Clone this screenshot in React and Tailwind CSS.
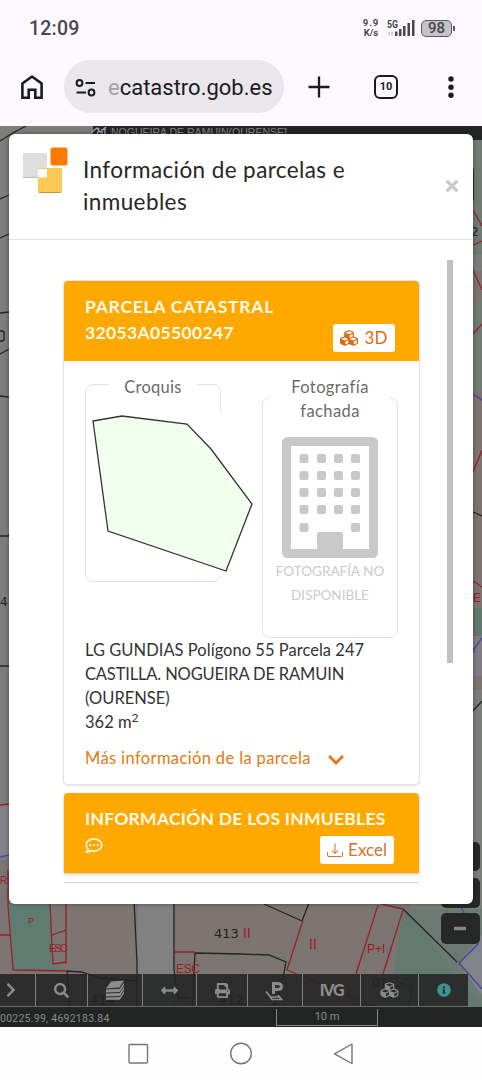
import { FaChevronRight, FaChevronDown, FaSearch, FaArrowsAltH, FaPrint, FaCubes, FaInfoCircle, FaRegCommentDots, FaTimes } from 'react-icons/fa';
import { BsDownload } from 'react-icons/bs';

function StatusBar() {
  return (
    <div className="h-[56px] flex items-center pl-[29px] pr-[27px] text-[#48464c]">
      <span className="mt-px text-[19.5px] font-medium tracking-[0.2px] font-['Roboto',sans-serif]">12:09</span>
      <div className="ml-auto flex items-center">
        <div className="font-['Roboto',sans-serif] text-[9.5px] leading-[10px] font-bold text-center w-[18px]">
          <div className="tracking-[0.9px]">9.9</div>
          <div>K/s</div>
        </div>
        <svg width="29" height="20" viewBox="386 18 29 20" className="ml-[6px]" fill="#48464c">
          <text x="387" y="27.5" fontSize="10" fontWeight="700" fontFamily="Roboto, sans-serif" textLength="11" lengthAdjust="spacingAndGlyphs">5G</text>
          <path d="M388 32h2v3h-2zM391 32h2v3h-2z" opacity=".25" />
          <path d="M395 31.500h2.500v4.500H395zM399 29h2.500v7H399zM403 26h2.500v10H403zM407.500 23H410v13h-2.500zM412 20h2.500v16H412z" />
        </svg>
        <div className="ml-[6px] w-[31px] h-[17px] rounded-[5px] border-[1.5px] border-[#5c5a60] bg-[#c5c2c9] flex items-center justify-center text-[15px] font-medium leading-none font-['Roboto',sans-serif]">98</div>
        <div className="ml-px w-[2px] h-[5px] bg-[#5c5a60]" />
      </div>
    </div>
  );
}

function BrowserBar() {
  return (
    <div className="h-[70px] flex items-start pt-[4px] text-[#1b1b1f]">
      <svg width="24" height="26" viewBox="0 0 24 26" className="ml-[20px] mt-[14px]" fill="none" stroke="currentColor" strokeWidth="2.600">
        <path d="M2.400 9.500 12 2.500l9.600 7v14.200h-6.300v-8H8.700v8H2.400z" />
      </svg>
      <div className="ml-[20px] w-[220px] h-[53px] rounded-full bg-[#e9e6ec] flex items-center">
        <svg width="22" height="18" viewBox="0 0 22 18" className="ml-[11px] mt-[2px]" fill="none" stroke="currentColor" strokeWidth="2">
          <circle cx="4.500" cy="4" r="2.900" />
          <path d="M10.500 4H20M1.500 13.500H11" />
          <circle cx="16.500" cy="13.500" r="2.900" />
        </svg>
        <span className="ml-[11px] mt-px text-[22px] font-['Roboto',sans-serif] whitespace-nowrap">
          <span className="text-[#a3a1a7]">e</span>catastro.gob.es
        </span>
      </div>
      <svg width="22" height="22" viewBox="0 0 22 22" className="ml-[24px] mt-[16px]" stroke="currentColor" strokeWidth="2.300">
        <path d="M11 .5v21M.5 11h21" />
      </svg>
      <div className="ml-[44px] mt-[15px] w-[24px] h-[24px] rounded-[6px] border-2 border-current flex items-center justify-center text-[11px] font-bold font-['Roboto',sans-serif]">10</div>
      <svg width="6" height="24" viewBox="0 0 6 24" className="ml-[50px] mt-[15px]" fill="currentColor">
        <circle cx="3" cy="4" r="2.700" />
        <circle cx="3" cy="12.200" r="2.700" />
        <circle cx="3" cy="20.300" r="2.700" />
      </svg>
    </div>
  );
}

// dimmed cadastral map behind the dialog
function MapCanvas() {
  return (
    <svg className="absolute inset-0" width="482" height="901" viewBox="0 126 482 901" fill="none" fontFamily="Liberation Sans, sans-serif">
      <rect y="126" width="482" height="901" fill="#7b7e7a" />
      <path d="M472 270h10v420h-10z" fill="#7d7471" />
      <path d="M472 140h10v115h-10zM472 300h10v90h-10z" fill="#6f7b73" />
      <path d="M472 608h10v28h-10z" fill="#62796e" />
      <path d="M472 636h10v40h-10z" fill="#807d85" />
      <path d="M0 805h9v52H0z" fill="#85818a" />
      <path d="M0 860h67v167H0zM67 900h71v127H67zM174 900h238l-20 127H174z" fill="#7d7571" />
      <path d="M138 900h36v127h-38z" fill="#818181" />
      <path d="M8 900h42l3 65 14 5H13z" fill="#607b70" />
      <path d="M403 909h79v118h-95z" fill="#637a70" />
      <path d="M403 909h79v97z" fill="#6b7a73" />
      <path d="M458 963l24-28v60z" fill="#82848c" />

      <path d="M93 126h389v14H93z" fill="#242525" />
      <text x="111" y="136" fontSize="10.500" fill="#858585" textLength="176" lengthAdjust="spacingAndGlyphs">NOGUEIRA DE RAMUIN(OURENSE]</text>
      <path d="M92 132l5-4 3 4 6-5M97 135l2-7m3 7v-6m3 5v-7" stroke="#a3a3a3" strokeWidth="1.300" />

      <g stroke="#242424" strokeWidth="1.300">
        <path d="M0 141q14-9 26-15M0 199l9-4M0 238l9-4M0 313l9-1M0 354l9-5M0 396l9 1M0 536h9v-2M0 666h9" />
        <path d="M473 512l9 4M473 711l9-10M134 900l3 63v64M174 900v70l4 28h12M195 953l-4 74M195 953l46 1 28 1 17 7-5 26-16 39M264 904l38 17 7-18M403 909l54 53M67 971l14 1 20 6 37 3M67 971l3 47 30 4 38 4" />
      </g>
      <g stroke="#96222b" strokeWidth="1.300">
        <path d="M8 870v35l5 65 54 1M0 935h11M50 904l3 60 14-2M66 904v26l-14 5M66 930v34M174 952h21M303 920l-16 50 100 42M378 905l-22 69M403 910l-20 64M381 904l22 5" />
        <path d="M473 210l9 16M473 245l9-4M473 270l9 20M473 334l9-10M473 472l9-22M473 581l9 6M0 805l9-1M408 992l5-5-9 33" />
      </g>
      <path d="M473 394l9 6M482 638l-8 11v4M0 857l9-2M460 904l18 40-19 19 23 26" stroke="#514a9c" strokeWidth="1.600" />

      <g fill="#9c1c29">
        <text x="28" y="924" fontSize="9">P</text>
        <text x="49" y="952" fontSize="11" textLength="19">ESC</text>
        <text x="176" y="973" fontSize="12" textLength="24">ESC</text>
        <text x="243" y="938" fontSize="14">II</text>
        <text x="309" y="949" fontSize="14">II</text>
        <text x="367" y="953" fontSize="12">P+I</text>
        <text x="473" y="602" fontSize="12">E</text>
        <text x="0" y="884" fontSize="10">R</text>
      </g>
      <g fill="#1f1f1f" fontFamily="DejaVu Sans, sans-serif">
        <text x="214" y="938" fontSize="13">413</text>
        <text x="90" y="1004" fontSize="13">414</text>
        <text x="219" y="1004" fontSize="13">412</text>
        <text x="372" y="987" fontSize="12">01<tspan fill="#6e1c24">ESC</tspan></text>
        <text x="0" y="606" fontSize="12">4</text>
        <text x="471" y="236" fontSize="12">2</text>
      </g>
      {/* parcel number running under the dialog edge */}
      <path d="M0 331h2q2 0 2 2v6q0 2-2 2H0" stroke="#1f1f1f" strokeWidth="1.300" />

      {/* zoom controls */}
      <rect x="462" y="168" width="12" height="34" rx="3" fill="#2b2c2c" />
      <rect x="441" y="842" width="39" height="29" rx="5" fill="#262727" />
      <rect x="441" y="878" width="39" height="30" rx="5" fill="#262727" />
      <rect x="441" y="913" width="39" height="31" rx="5" fill="#262727" />
      <path d="M454 928.500h12" stroke="#858585" strokeWidth="3.500" />
    </svg>
  );
}

function Header({ children, action, title }) {
  return (
    <div className="h-[80px] bg-[#ffa800] rounded-t-[4px] pl-[21px] pr-[24px] pt-[13px] text-[#fffbe8]">
      <div className="h-[25px] text-[17.5px] leading-[25px] font-bold whitespace-nowrap">{title}</div>
      <div className="flex items-start justify-between">
        <div className="pt-[2px] text-[17.5px] leading-[24px] font-bold">{children}</div>
        {action}
      </div>
    </div>
  );
}

function Building() {
  const rows = [455, 472, 489, 506, 524];
  const cols = [299.500, 317, 334, 351];
  return (
    <svg width="96" height="121" viewBox="282 437 96 121" fill="#c9c9c9">
      <rect x="286.500" y="441.500" width="87" height="112" rx="1" fill="none" stroke="#c9c9c9" strokeWidth="9" strokeLinejoin="round" />
      {rows.map((y, r) =>
        cols.map((x, c) => (r === 4 && (c === 1 || c === 2) ? null : <rect key={`${x}-${y}`} x={x} y={y - 1} width="9" height="9" rx="2" />))
      )}
      <path d="M317 534q0-2 2-2h22q2 0 2 2v22h-26z" />
    </svg>
  );
}

function ParcelCard() {
  return (
    <div className="h-[503px] rounded-[4px] shadow-[0_0_0_1px_#e4e4e4,0_1px_3px_#ccc]">
      <Header
        title={<span className="tracking-[0.75px]">PARCELA CATASTRAL</span>}
        action={
          <button className="mt-[5px] w-[62px] h-[28px] rounded-[3px] bg-white text-[#d96a10] flex items-center justify-center gap-[6px] text-[17px] pr-[2px]">
            <FaCubes className="w-[20px] h-[18px]" />
            3D
          </button>
        }
      >
        <span className="tracking-[0.35px]">32053A05500247</span>
      </Header>
      <div className="px-[21px] pt-[11px]">
        <div className="flex items-start h-[266px] gap-[41px] text-[16.5px] text-[#6b6b6b]">
          <fieldset className="min-w-0 w-[136px] h-[210px] border border-[#e2e2e2] rounded-[8px]">
            <legend className="mx-auto w-[88px] h-[24px] pt-[3px] leading-[24px] text-center tracking-[0.25px]">Croquis</legend>
            <svg width="165" height="164" viewBox="91 412 165 164" className="ml-[5px] mt-[16px] bg-white max-w-none">
              <path d="M93 421 122 416 187 424 211 449 252 504 226 571 108 531z" fill="#f0ffee" stroke="#333" strokeWidth="1.300" />
            </svg>
          </fieldset>
          <fieldset className="mt-px min-w-0 w-[136px] h-[265px] border border-[#e2e2e2] rounded-[8px]">
            <legend className="mx-auto w-[120px] h-[48px] pt-[2px] leading-[24px] text-center tracking-[0.4px]">Fotografía fachada</legend>
            <div className="flex flex-col items-center pt-[16px]">
              <Building />
              <div className="mt-px w-[112px] text-center text-[13.5px] leading-[24px] whitespace-nowrap text-[#cbcbcb]">FOTOGRAFÍA NO<br />DISPONIBLE</div>
            </div>
          </fieldset>
        </div>
        <div className="text-[16.5px] leading-[24px] text-[#333] whitespace-nowrap">
          <div className="tracking-[0.03px]">LG GUNDIAS Polígono 55 Parcela 247</div>
          <div className="tracking-[-0.16px]">CASTILLA. NOGUEIRA DE RAMUIN</div>
          <div>(OURENSE)</div>
          <div>362 m<sup className="text-[12px]">2</sup></div>
        </div>
        <a className="mt-[12px] flex items-center text-[16.5px] leading-[24px] text-[#e17a12]">
          <span className="tracking-[0.37px]">Más información de la parcela</span>
          <FaChevronDown className="ml-[16px] mt-[3px] w-[18px] h-[18px]" />
        </a>
      </div>
    </div>
  );
}

function Modal() {
  return (
    <div className="relative mt-[8px] mx-[9px] h-[770px] rounded-[6px] bg-white font-['Lato',sans-serif] shadow-[0_0_4px_rgba(0,0,0,0.4)]">
      <div className="h-[106px] border-b border-[#e4e4e4] flex">
        <svg width="46" height="46" viewBox="22 147 46 46" className="ml-[13px] mt-[13px]">
          <rect x="23" y="153" width="24" height="25" rx="1.500" fill="#dedede" />
          <path d="M23 177.500h24" stroke="#bdbdbd" />
          <rect x="50.500" y="147.500" width="17" height="18" rx="2.500" fill="#ff7900" />
          <path d="M38 168h24v23q0 1.500-1.500 1.500h-21q-1.500 0-1.500-1.500z" fill="#fdc955" />
          <path d="M39 192.500h22" stroke="#c69a40" />
          <rect x="38" y="169" width="9" height="8.500" rx="1" fill="#fff" />
        </svg>
        <h1 className="ml-[15px] mt-[20px] text-[22.5px] leading-[32px] text-[#262626] w-[300px] tracking-[0.4px]">
          Información de parcelas e inmuebles
        </h1>
        <FaTimes className="ml-[60px] mt-[43px] w-[18px] h-[18px] text-[#cacaca]" />
      </div>
      <div className="flex">
        <div className="ml-[55px] mt-[41px] w-[355px]">
          <ParcelCard />
          <div className="mt-[9px] shadow-[0_1px_3px_#bbb] rounded-t-[4px]">
            <Header
              title={<span className="tracking-[0.25px]">INFORMACIÓN DE LOS INMUEBLES</span>}
              action={
                <button className="mt-[5px] mr-px w-[74px] h-[28px] rounded-[3px] bg-white text-[#cf7430] flex items-center justify-center gap-[5px] text-[17px]">
                  <BsDownload className="w-[16px] h-[16px]" />
                  Excel
                </button>
              }
            >
              <FaRegCommentDots className="mt-[4px] w-[18px] h-[17px]" />
            </Header>
          </div>
          <div className="mt-[9px] h-px bg-[#d6d6d6]" />
        </div>
        <div className="ml-[28px] mt-[20px] w-[6px] h-[403px] bg-[#c1c1c1]" />
      </div>
    </div>
  );
}

function Toolbar() {
  const cell = 'h-full flex items-center justify-center border-r border-[#808080]';
  return (
    <div className="relative mt-auto">
      <div className="flex w-[468px] h-[33px] bg-[#222323]/88 border-b border-[#6b6b6b] text-[#8c8c8c]">
        <div className={`${cell} w-[36px] pr-[14px]`}><FaChevronRight className="w-[14px] h-[16px]" /></div>
        <div className={`${cell} w-[52px]`}><FaSearch className="w-[15px] h-[15px]" /></div>
        <div className={`${cell} w-[55px]`}>
          <svg width="20" height="20" viewBox="0 0 20 20" fill="currentColor">
            <path d="M6 1.500 19 .5 14.500 7.500 1 8.500z" />
            <path d="M1 9.500 14.800 8.700 19 2.500v3L14.800 12 1 12.500zM1 13.500 14.800 12.900 19 6.800v3L14.800 16 1 16.500zM1 17.500 14.800 17 19 11v2.500L14.800 19.800 1 19.800z" />
          </svg>
        </div>
        <div className={`${cell} w-[54px]`}><FaArrowsAltH className="w-[17px] h-[17px]" /></div>
        <div className={`${cell} w-[51px]`}><FaPrint className="w-[15px] h-[15px]" /></div>
        <div className={`${cell} w-[55px]`}>
          <svg width="20" height="21" viewBox="0 0 20 21" fill="none" stroke="currentColor">
            <path d="M8.500 14V3.500h4q4 0 4 3t-4 3h-4" strokeWidth="3" />
            <path d="M1 11.500l4.500 5.500h9M4 15l3 4.500h9.500l-3.500-4.500" strokeWidth="1.700" />
          </svg>
        </div>
        <div className={`${cell} w-[58px] text-[16px] font-black tracking-[-1.3px] font-['Lato',sans-serif]`}>IVG</div>
        <div className={`${cell} w-[58px]`}><FaCubes className="w-[21px] h-[18px]" /></div>
        <div className="flex-1 flex items-center justify-center"><FaInfoCircle className="w-[14px] h-[14px] text-[#3d9393]" /></div>
      </div>
      <div className="h-[20px] bg-[#232424] flex items-start text-[#8c8c8c] font-['Roboto',sans-serif]">
        <span className="w-[276px] text-[10.5px] leading-[24px] tracking-[0.25px] whitespace-nowrap">00225.99, 4692183.84</span>
        <div className="mt-[2px] w-[102px] h-[17px] border border-t-0 border-[#888] text-center text-[11px] leading-[15px]">10 m</div>
      </div>
    </div>
  );
}

function NavBar() {
  return (
    <div className="h-[53px] flex items-center justify-center bg-[#fefefe]">
      <svg width="482" height="53" viewBox="0 1027 482 53" fill="none" stroke="#77757a" strokeWidth="1.400">
        <rect x="129" y="1044.500" width="18.500" height="18.500" rx="1" />
        <circle cx="241" cy="1053.500" r="10.300" />
        <path d="M352 1044v19.500l-17.500-9.700z" strokeLinejoin="round" />
      </svg>
    </div>
  );
}

export default function App() {
  return (
    <div className="w-[482px] h-[1080px] overflow-hidden bg-[#fbf8fe] flex flex-col">
      <StatusBar />
      <BrowserBar />
      <div className="relative h-[901px] shrink-0 overflow-hidden flex flex-col">
        <MapCanvas />
        <Modal />
        <Toolbar />
      </div>
      <NavBar />
    </div>
  );
}
